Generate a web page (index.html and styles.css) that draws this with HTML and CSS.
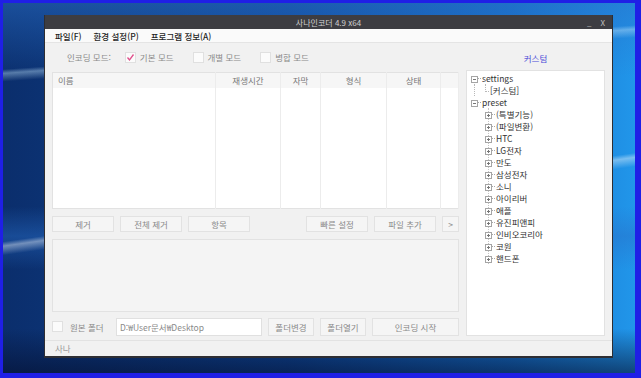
FILE: index.html
```html
<!DOCTYPE html>
<html lang="ko">
<head>
  <meta charset="UTF-8">
  <title>사나인코더 4.9 x64</title>
  <link rel="stylesheet" href="styles.css">
</head>
<body>
  <div class="screen">
    <div class="window">
      <div class="titlebar">
        <span></span>
        <span class="title">사나인코더 4.9 x64</span>
        <span class="ctrls"><span>_</span><span>X</span></span>
      </div>
      <div class="menubar">
        <span>파일(F)</span>
        <span>환경 설정(P)</span>
        <span>프로그램 정보(A)</span>
      </div>

      <div class="main">
        <div class="left">
          <div class="modes">
            <span class="mode-label">인코딩 모드:</span>
            <label class="opt"><span class="check on"><svg width="9" height="9" viewBox="0 0 9 9"><polyline points="1.5,4.5 3.5,7 7.5,1.5" fill="none" stroke="#e0508c" stroke-width="1.3"/></svg></span>기본 모드</label>
            <label class="opt"><span class="check"></span>개별 모드</label>
            <label class="opt"><span class="check"></span>병합 모드</label>
          </div>

          <table class="files">
            <colgroup>
              <col style="width:163px"><col style="width:65px"><col style="width:40px">
              <col style="width:66px"><col style="width:54px"><col>
            </colgroup>
            <tr>
              <th class="name">이름</th><th>재생시간</th><th>자막</th><th>형식</th><th>상태</th><th></th>
            </tr>
            <tr class="rows">
              <td></td><td></td><td></td><td></td><td></td><td></td>
            </tr>
          </table>

          <div class="btn-row">
            <button class="btn">제거</button>
            <button class="btn">전체 제거</button>
            <button class="btn">항목</button>
            <button class="btn push">빠른 설정</button>
            <button class="btn">파일 추가</button>
            <button class="btn small">&gt;</button>
          </div>

          <div class="log"></div>

          <div class="out-row">
            <span class="check"></span>
            <span class="out-label">원본 폴더</span>
            <input class="path" type="text" value="D:₩User문서₩Desktop" readonly>
            <button class="btn mid">폴더변경</button>
            <button class="btn mid">폴더열기</button>
            <button class="btn wide">인코딩 시작</button>
          </div>
        </div>

        <div class="right">
          <div class="custom">커스텀</div>
          <div class="tree">
            <ul>
              <li><span class="box"></span><span class="dash"></span>settings
                <ul class="sub">
                  <li><span class="elbow"></span>[커스텀]</li>
                </ul>
              </li>
              <li><span class="box"></span><span class="dash"></span>preset
                <ul class="kids">
                  <li><span class="box plus"></span><span class="dash"></span>(특별기능)</li>
                  <li><span class="box plus"></span><span class="dash"></span>(파일변환)</li>
                  <li><span class="box plus"></span><span class="dash"></span>HTC</li>
                  <li><span class="box plus"></span><span class="dash"></span>LG전자</li>
                  <li><span class="box plus"></span><span class="dash"></span>만도</li>
                  <li><span class="box plus"></span><span class="dash"></span>삼성전자</li>
                  <li><span class="box plus"></span><span class="dash"></span>소니</li>
                  <li><span class="box plus"></span><span class="dash"></span>아이리버</li>
                  <li><span class="box plus"></span><span class="dash"></span>애플</li>
                  <li><span class="box plus"></span><span class="dash"></span>유진피앤피</li>
                  <li><span class="box plus"></span><span class="dash"></span>인비오코리아</li>
                  <li><span class="box plus"></span><span class="dash"></span>코원</li>
                  <li><span class="box plus"></span><span class="dash"></span>핸드폰</li>
                </ul>
              </li>
            </ul>
          </div>
        </div>
      </div>

      <div class="status">사나</div>
    </div>
  </div>
</body>
</html>
```

FILE: styles.css
```css
* {
  box-sizing: border-box;
}
html, body {
  margin: 0;
}
body {
  width: 641px;
  height: 378px;
  overflow: hidden;
  font-family: "Noto Sans CJK KR", "Noto Sans", sans-serif;
  font-size: 8.5px;
  color: #333;
}
.screen {
  height: 378px;
  border-style: solid;
  border-color: #1f1fe6;
  border-width: 3px 6px 5px 3px;
  padding: 12px 0 0 41px;
  background:
    linear-gradient(172deg, transparent 52%, rgba(255,255,255,0.4) 53%, transparent 55%),
    linear-gradient(176deg, transparent 16%, rgba(200,235,255,0.4) 17%, transparent 19%),
    linear-gradient(180deg, rgba(40,110,200,0.5) 0%, transparent 20%, transparent 55%, rgba(40,110,200,0.45) 63%, transparent 72%, transparent 88%, rgba(4,14,45,0.6) 100%),
    linear-gradient(90deg, #0b2e6c 0%, #0e4695 45%, #1670c8 80%, #2196ea 100%);
}
.window {
  width: 569px;
  height: 343px;
  background: #f1f1f1;
  border: 1px solid #2e2e33;
  border-top: 0;
  border-bottom-width: 2px;
  display: flex;
  flex-direction: column;
}
.titlebar {
  height: 15px;
  background: #3d3d42;
  color: #cfcfcf;
  font-size: 8px;
  display: grid;
  grid-template-columns: 1fr auto 1fr;
  align-items: center;
}
.ctrls {
  justify-self: end;
  display: flex;
  gap: 9px;
  padding-right: 7px;
  color: #bdbdbd;
}
.menubar {
  height: 14px;
  background: #fafafa;
  border-bottom: 1px solid #e4e4e4;
  display: flex;
  align-items: center;
  gap: 12px;
  padding-left: 10px;
  color: #1e1e1e;
  font-weight: 500;
}
.main {
  display: grid;
  grid-template-columns: 407px 139px;
  column-gap: 7px;
  padding: 0 7px 4px;
}
.left {
  display: flex;
  flex-direction: column;
}
.modes {
  height: 29px;
  display: flex;
  align-items: center;
  padding-left: 15px;
  color: #8a8a8a;
}
.mode-label {
  margin-right: 14px;
}
.opt {
  display: flex;
  align-items: center;
  gap: 4px;
  margin-right: 19px;
}
.check {
  width: 11px;
  height: 11px;
  background: #fbfbfb;
  border: 1px solid #e0e0e0;
  display: flex;
  align-items: center;
  justify-content: center;
}
.files {
  width: 407px;
  height: 137px;
  border-collapse: collapse;
  table-layout: fixed;
  background: #fff;
  border: 1px solid #e2e2e2;
}
.files th {
  height: 16px;
  padding: 0;
  background: #f6f6f6;
  color: #777;
  font-weight: normal;
  border-right: 1px solid #ececec;
}
.files th.name {
  text-align: left;
  padding-left: 5px;
}
.files td {
  border-right: 1px solid #ececec;
}
.btn-row {
  margin-top: 7px;
  display: flex;
  gap: 6px;
}
.btn {
  height: 16px;
  width: 62px;
  padding: 0;
  background: #f5f5f5;
  border: 1px solid #e2e2e2;
  color: #8a8a8a;
  font-family: inherit;
  font-size: 8.5px;
}
.btn.push {
  margin-left: auto;
}
.btn.small {
  width: 17px;
}
.log {
  margin-top: 7px;
  height: 73px;
  background: #f4f4f4;
  border: 1px solid #e2e2e2;
}
.out-row {
  margin-top: 6px;
  height: 18px;
  display: flex;
  align-items: center;
  gap: 6px;
  color: #8a8a8a;
}
.out-label {
  margin-left: 1px;
  width: 40px;
}
.path {
  width: 146px;
  height: 18px;
  border: 1px solid #e0e0e0;
  background: #fff;
  color: #8a8a8a;
  font-family: inherit;
  font-size: 8.5px;
  padding: 0 3px;
  outline: none;
}
.out-row .btn {
  height: 18px;
}
.btn.mid {
  width: 46px;
}
.btn.wide {
  width: 87px;
}
.right {
  display: flex;
  flex-direction: column;
}
.custom {
  height: 27px;
  line-height: 31px;
  text-align: center;
  color: #4a4ad8;
}
.tree {
  flex: 1;
  background: #fff;
  border: 1px solid #e2e2e2;
  padding: 1px 0 0 4px;
  color: #333;
}
.tree ul {
  list-style: none;
  margin: 0;
  padding: 0;
}
.tree li {
  line-height: 12px;
  white-space: nowrap;
}
.box {
  display: inline-block;
  vertical-align: -1px;
  width: 7px;
  height: 7px;
  border: 1px solid #a5a5a5;
  background: #fff linear-gradient(#777, #777) center / 3px 1px no-repeat;
}
.box.plus {
  background:
    linear-gradient(#777, #777) center / 3px 1px no-repeat,
    linear-gradient(#777, #777) center / 1px 3px no-repeat,
    #fff;
}
.dash {
  display: inline-block;
  width: 3px;
  margin: 0 1px 2px 0;
  vertical-align: middle;
  border-top: 1px dotted #aaa;
}
.sub {
  margin-left: 3px !important;
  border-left: 1px dotted #b8b8b8;
}
.elbow {
  display: inline-block;
  width: 4px;
  height: 8px;
  margin: 0 1px 0 10px;
  vertical-align: 2px;
  border-left: 1px dotted #b8b8b8;
  border-bottom: 1px dotted #b8b8b8;
}
.kids {
  margin-left: 17px !important;
  border-left: 1px dotted #c4c4c4;
}
.kids .box {
  margin-left: -4px;
}
.status {
  height: 17px;
  border-top: 1px solid #e2e2e2;
  padding-left: 10px;
  line-height: 15px;
  color: #999;
}
```
